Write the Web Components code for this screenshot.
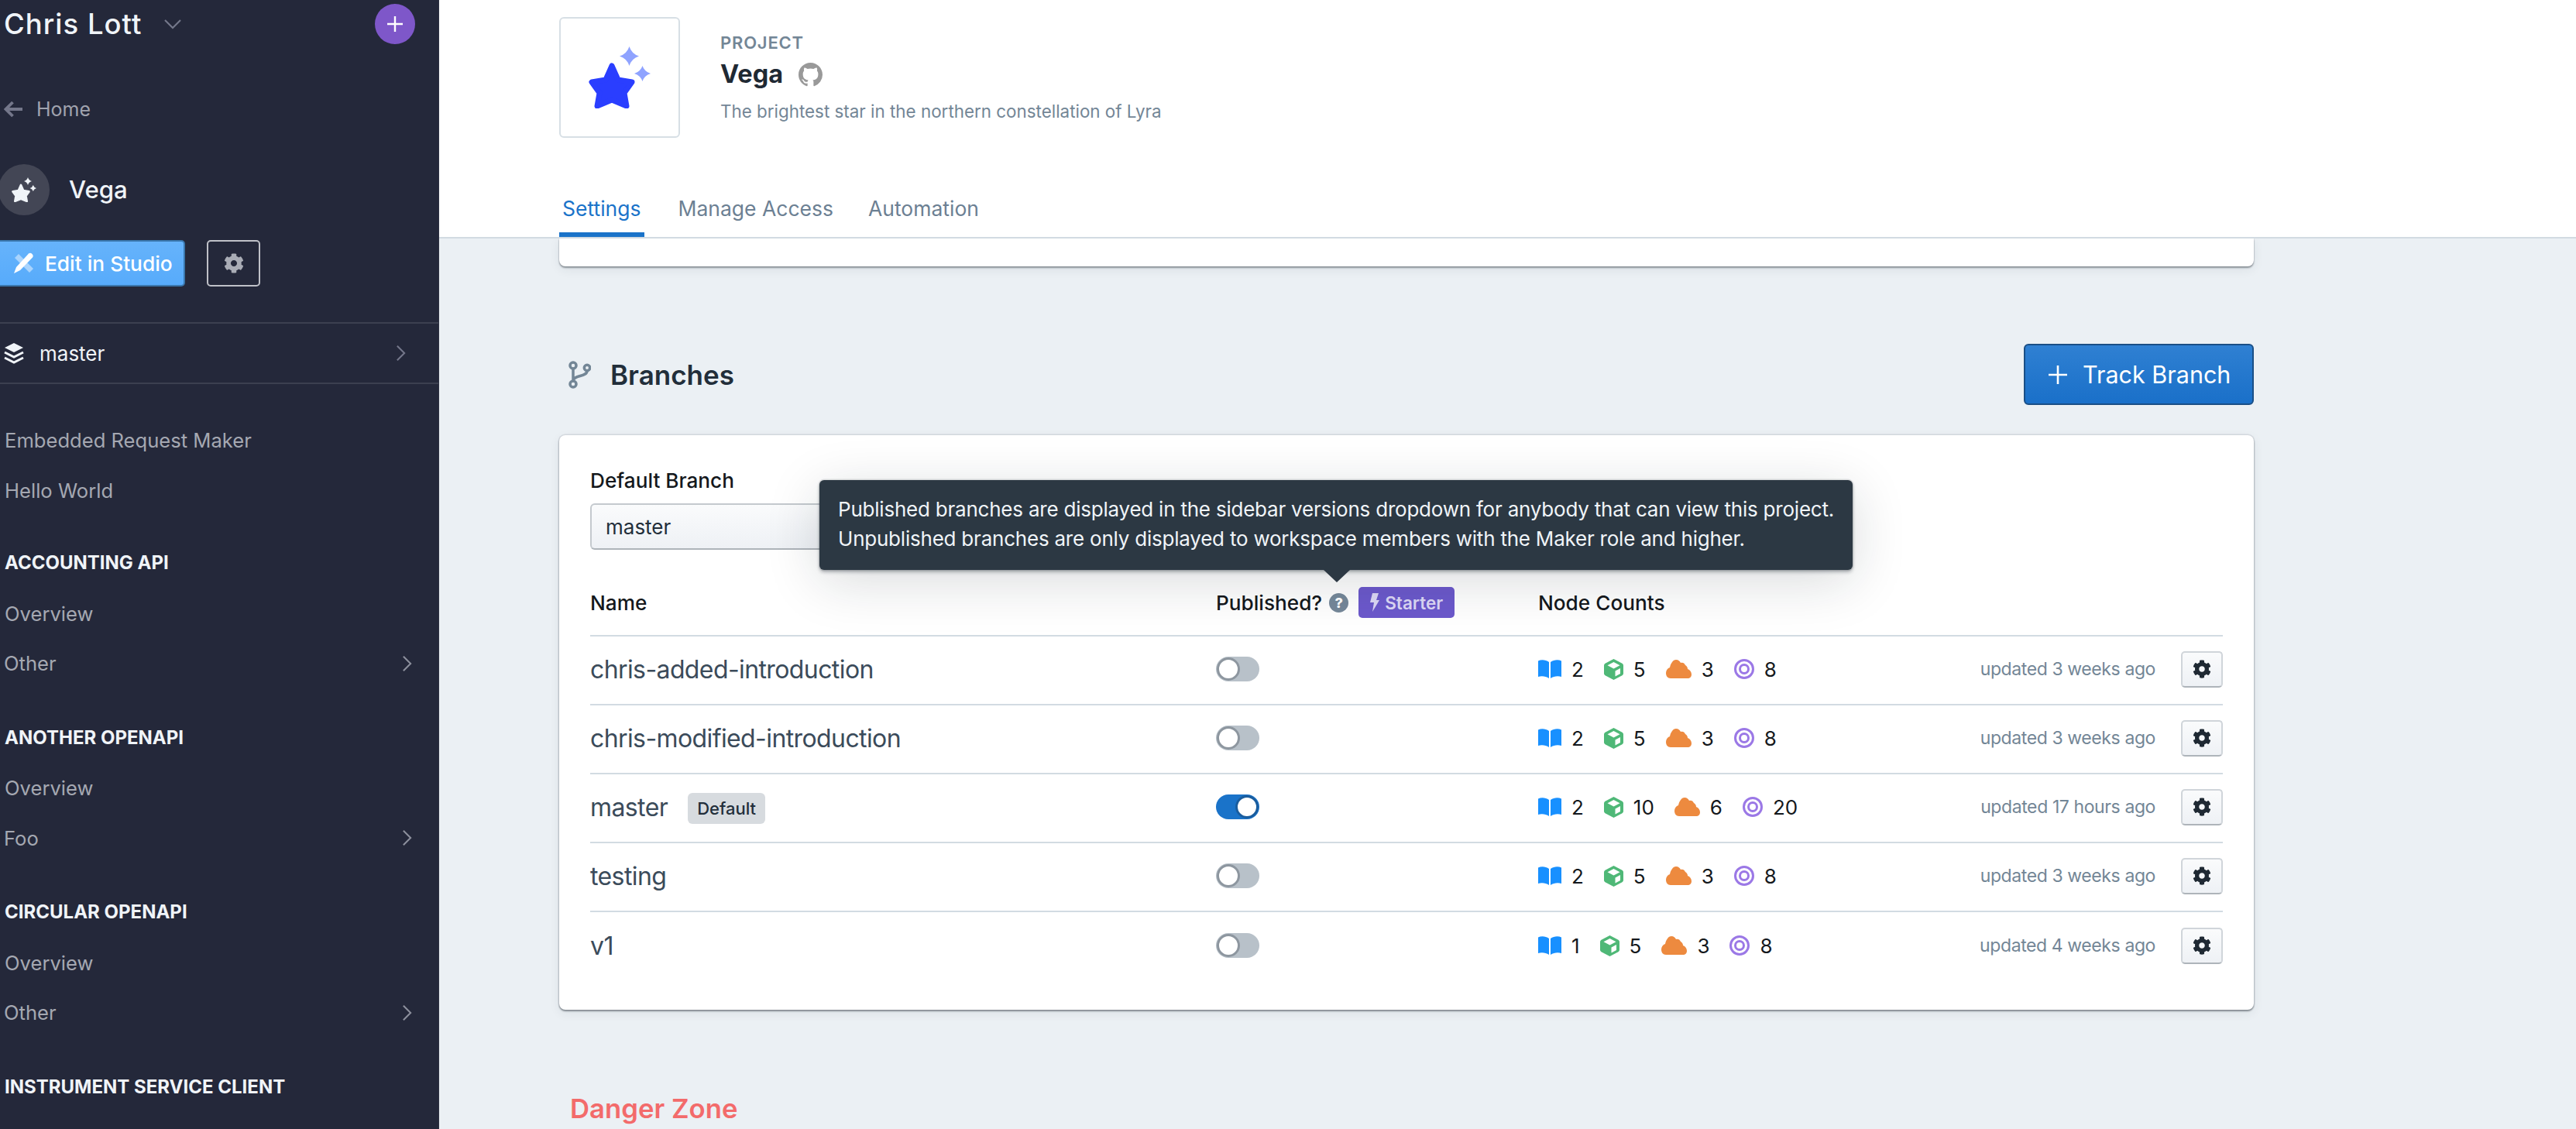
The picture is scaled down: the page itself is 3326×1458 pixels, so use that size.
<!DOCTYPE html>
<html lang="en">
<head>
<meta charset="utf-8">
<title>Vega - Settings</title>
<style>
  html, body { margin: 0; height: 1458px; overflow: hidden; background: #ebf0f4; }
  body { display: flex; font-family: Inter, "Liberation Sans", sans-serif; }
</style>
</head>
<body>
<app-sidebar>
  <nav-item>Embedded Request Maker</nav-item>
  <nav-item>Hello World</nav-item>
  <nav-section first label="Accounting API"><nav-item>Overview</nav-item><nav-item more>Other</nav-item></nav-section>
  <nav-section label="Another OpenAPI"><nav-item>Overview</nav-item><nav-item more>Foo</nav-item></nav-section>
  <nav-section label="Circular OpenAPI"><nav-item>Overview</nav-item><nav-item more>Other</nav-item></nav-section>
  <nav-section label="Instrument Service Client"></nav-section>
</app-sidebar>
<main-area>
  <project-header></project-header>
  <page-body>
    <branches-card>
      <help-tooltip>Published branches are displayed in the sidebar versions dropdown for anybody that can view this project.<br>Unpublished branches are only displayed to workspace members with the Maker role and higher.</help-tooltip>
      <branch-row name="chris-added-introduction" counts="2,5,3,8" updated="updated 3 weeks ago"></branch-row>
      <branch-row name="chris-modified-introduction" counts="2,5,3,8" updated="updated 3 weeks ago"></branch-row>
      <branch-row name="master" default on counts="2,10,6,20" updated="updated 17 hours ago"></branch-row>
      <branch-row name="testing" counts="2,5,3,8" updated="updated 3 weeks ago"></branch-row>
      <branch-row name="v1" last counts="1,5,3,8" updated="updated 4 weeks ago"></branch-row>
    </branches-card>
  </page-body>
</main-area>

<script>
const GEAR = `<svg viewBox="0 0 512 512" width="100%" height="100%"><path fill="currentColor" d="M487.4 315.7l-42.6-24.6c4.3-23.2 4.3-47 0-70.2l42.6-24.6c4.9-2.8 7.1-8.6 5.5-14-11.1-35.6-30-67.8-54.7-94.6-3.8-4.1-10-5.1-14.8-2.3L380.8 110c-17.9-15.4-38.5-27.3-60.8-35.1V25.8c0-5.6-3.9-10.5-9.4-11.7-36.7-8.2-74.3-7.8-109.2 0-5.5 1.2-9.4 6.1-9.4 11.7V75c-22.2 7.9-42.8 19.8-60.8 35.1L88.7 85.5c-4.9-2.8-11-1.9-14.8 2.3-24.7 26.7-43.6 58.9-54.7 94.6-1.7 5.4.6 11.2 5.5 14L67.3 221c-4.3 23.2-4.3 47 0 70.2l-42.6 24.6c-4.9 2.8-7.1 8.6-5.5 14 11.1 35.6 30 67.8 54.7 94.6 3.8 4.1 10 5.1 14.8 2.3l42.6-24.6c17.9 15.4 38.5 27.3 60.8 35.1v49.2c0 5.6 3.9 10.5 9.4 11.7 36.7 8.2 74.3 7.8 109.2 0 5.5-1.2 9.4-6.1 9.4-11.7v-49.2c22.2-7.9 42.8-19.8 60.8-35.1l42.6 24.6c4.9 2.8 11 1.9 14.8-2.3 24.7-26.7 43.6-58.9 54.7-94.6 1.5-5.5-.7-11.3-5.6-14.1zM256 336c-44.1 0-80-35.9-80-80s35.9-80 80-80 80 35.9 80 80-35.9 80-80 80z"/></svg>`;
const CHEVRON = `<svg viewBox="0 0 14 24" width="13" height="24"><path d="M2 2l10 10L2 22" fill="none" stroke="currentColor" stroke-width="2.2"/></svg>`;
const STAR_PATHS = (star, spark) => `
  <path d="M30 25L38 43 56 46 46 60 49 77 30 69 11 77 14 60 4 46 22 43z" fill="${star}" stroke="${star}" stroke-width="7" stroke-linejoin="round"/>
  <path d="M52.500 0Q55.500 9.500 65 12.500 55.500 15.500 52.500 25 49.500 15.500 40 12.500 49.500 9.500 52.500 0z" fill="${spark}"/>
  <path d="M69.500 25Q72 32.500 80 35 72 37.500 69.500 45 67 37.500 59 35 67 32.500 69.500 25z" fill="${spark}"/>`;

class AppSidebar extends HTMLElement {
  constructor() {
    super();
    this.attachShadow({ mode: "open" }).innerHTML = `
      <style>
        :host { display: block; flex: 0 0 567px; width: 567px; height: 1458px; overflow: hidden; background: #24283a; color: #f0f4f8; border-right: 1px solid #2f3344; box-sizing: border-box; }
        .top { display: flex; align-items: center; height: 62px; padding-left: 5px; }
        .org { font-size: 36.5px; font-weight: 500; letter-spacing: 1px; }
        .down { margin-left: 28px; color: #74778a; display: flex; }
        .add { margin-left: auto; margin-right: 30px; width: 52px; height: 52px; border-radius: 50%; background: #7e57c9; display: grid; place-items: center; }
        .home { display: flex; align-items: center; height: 40px; margin-top: 59px; padding-left: 5px; gap: 18px; font-size: 25px; color: #a0a3ae; }
        .proj { display: flex; align-items: center; margin: 51px 0 0 -2px; gap: 25px; font-size: 31.200px; font-weight: 500; }
        .avatar { width: 66px; height: 66px; border-radius: 50%; background: #434655; display: grid; place-items: center; }
        .actions { display: flex; gap: 28px; margin-top: 32px; }
        .edit { width: 239px; height: 60px; box-sizing: border-box; border: 2px solid #3a77ad; border-left: 0; border-radius: 0 5px 5px 0; background: linear-gradient(#66b3fb, #57abfb); display: flex; align-items: center; gap: 13px; padding-left: 17px; font-size: 26.300px; font-weight: 500; color: #fff; }
        .cog { width: 69px; height: 60px; box-sizing: border-box; border: 2px solid #bfc1c8; border-radius: 5px; display: grid; place-items: center; color: #a9acb5; }
        .cog span { display: block; width: 26px; height: 28px; }
        .branch { display: flex; align-items: center; height: 80px; box-sizing: border-box; margin-top: 46px; border-top: 2px solid #3c4050; border-bottom: 2px solid #3c4050; padding-left: 5px; font-size: 26px; color: #f0f4f8; gap: 20px; }
        .branch .chev { margin-left: auto; margin-right: 42px; color: #74778a; display: flex; }
        .nav { margin-top: 40px; display: block; }
      </style>
      <div class="top"><span class="org">Chris Lott</span>
        <span class="down"><svg viewBox="0 0 24 14" width="24" height="14"><path d="M2 2l10 10L22 2" fill="none" stroke="currentColor" stroke-width="2.2"/></svg></span>
        <span class="add"><svg viewBox="0 0 22 22" width="22" height="22"><path d="M11 1v20M1 11h20" stroke="#fff" stroke-width="2.4"/></svg></span>
      </div>
      <div class="home"><svg viewBox="0 0 24 22" width="24" height="22"><path d="M11.500 2L2.500 11l9 9M3 11h21" fill="none" stroke="#74778a" stroke-width="3.800"/></svg>Home</div>
      <div class="proj"><span class="avatar"><svg width="32" height="32" viewBox="0 0 80 80">${STAR_PATHS("#f0f4f8", "#f0f4f8")}</svg></span>Vega</div>
      <div class="actions">
        <div class="edit"><svg viewBox="0 0 28 28" width="28" height="28">
            <path d="M2 7l5-5 19 19-5 5z" fill="#a9d4fd"/>
            <path d="M20 1.500c1.300-1 3-1 4.500.5s1.500 3.200.5 4.500L9 23l-8 4 3-8z" fill="#fff"/>
          </svg>Edit in Studio</div>
        <div class="cog"><span>${GEAR}</span></div>
      </div>
      <div class="branch"><svg viewBox="0 0 26 28" width="26" height="28"><path d="M13 1l12 6-12 6L1 7z" fill="#f0f4f8"/><path d="M1 13l12 6 12-6M1 20l12 6 12-6" fill="none" stroke="#f0f4f8" stroke-width="3"/></svg>master<span class="chev">${CHEVRON}</span></div>
      <div class="nav"><slot></slot></div>`;
  }
}
customElements.define("app-sidebar", AppSidebar);

class NavItem extends HTMLElement {
  constructor() {
    super();
    this.attachShadow({ mode: "open" }).innerHTML = `
      <style>
        :host { display: flex; align-items: center; height: 64.700px; padding: 0 34px 0 6px; font-size: 25.600px; color: #a5a8b2; }
        :host([more]) { padding-left: 5px; }
        span { margin-left: auto; display: flex; color: #8d909d; }
      </style>
      <slot></slot>${this.hasAttribute("more") ? `<span>${CHEVRON}</span>` : ""}`;
  }
}
customElements.define("nav-item", NavItem);

class NavSection extends HTMLElement {
  constructor() {
    super();
    this.attachShadow({ mode: "open" }).innerHTML = `
      <style>
        :host { display: block; margin-top: 31.500px; }
        :host([first]) { margin-top: 29.600px; }
        h3 { margin: 0; height: 64.700px; line-height: 64.700px; padding-left: 6px; font-size: 24px; font-weight: 700; text-transform: uppercase; color: #f0f4f8; }
      </style>
      <h3>${this.getAttribute("label")}</h3><slot></slot>`;
  }
}
customElements.define("nav-section", NavSection);

class MainArea extends HTMLElement {
  constructor() {
    super();
    this.attachShadow({ mode: "open" }).innerHTML = `
      <style>:host { display: block; flex: 1; min-width: 0; height: 1458px; overflow: hidden; background: #ebf0f4; }</style>
      <slot></slot>`;
  }
}
customElements.define("main-area", MainArea);

class ProjectHeader extends HTMLElement {
  constructor() {
    super();
    this.attachShadow({ mode: "open" }).innerHTML = `
      <style>
        :host { display: flex; flex-direction: column; position: relative; z-index: 2; height: 308px; box-sizing: border-box; background: #fff; border-bottom: 2px solid #d2dbe2; padding: 22px 0 0 155px; }
        .info { display: flex; }
        .logo { width: 156px; height: 156px; box-sizing: border-box; border: 2px solid #d7dfe5; border-radius: 6px; display: grid; place-items: center; }
        .logo span { display: block; width: 80px; height: 80px; }
        .text { margin: 20px 0 0 52px; }
        .eyebrow { font-size: 22px; font-weight: 600; line-height: 26px; letter-spacing: .8px; color: #738696; }
        h1 { margin: 4px 0 0; display: flex; align-items: center; gap: 20px; font-size: 32.500px; line-height: 48px; font-weight: 700; color: #1f2933; }
        p { margin: 10px 0 0; font-size: 22.400px; line-height: 28px; color: #738696; }
        .tabs { display: flex; margin-top: auto; }
        .tabs div { height: 66px; box-sizing: border-box; padding: 0 2px 8px; display: flex; align-items: center; font-size: 26.500px; color: #6c8093; }
        .tabs div + div { margin-left: 41px; }
        .tabs .active { color: #1a73c9; border-bottom: 6px solid #1a73c9; padding: 0 5px 2px 4px; }
      </style>
      <div class="info">
        <div class="logo"><span><svg viewBox="0 0 80 80" width="80" height="80">${STAR_PATHS("#2a3eff", "#8fa3ff")}</svg></span></div>
        <div class="text">
          <div class="eyebrow">PROJECT</div>
          <h1>Vega <svg viewBox="0 0 16 16" width="31" height="31"><path fill="#999" d="M8 0C3.58 0 0 3.58 0 8c0 3.54 2.29 6.53 5.47 7.59.4.07.55-.17.55-.38 0-.19-.01-.82-.01-1.49-2.01.37-2.53-.49-2.69-.94-.09-.23-.48-.94-.82-1.13-.28-.15-.68-.52-.01-.53.63-.01 1.08.58 1.23.82.72 1.21 1.87.87 2.33.66.07-.52.28-.87.51-1.07-1.78-.2-3.64-.89-3.64-3.95 0-.87.31-1.59.82-2.15-.08-.2-.36-1.02.08-2.12 0 0 .67-.21 2.2.82.64-.18 1.32-.27 2-.27.68 0 1.36.09 2 .27 1.53-1.04 2.2-.82 2.2-.82.44 1.1.16 1.92.08 2.12.51.56.82 1.27.82 2.15 0 3.07-1.87 3.75-3.65 3.95.29.25.54.73.54 1.48 0 1.07-.01 1.93-.01 2.2 0 .21.15.46.55.38A8.013 8.013 0 0016 8c0-4.42-3.58-8-8-8z"/></svg></h1>
          <p>The brightest star in the northern constellation of Lyra</p>
        </div>
      </div>
      <div class="tabs"><div class="active">Settings</div><div>Manage Access</div><div>Automation</div></div>`;
  }
}
customElements.define("project-header", ProjectHeader);

class PageBody extends HTMLElement {
  constructor() {
    super();
    this.attachShadow({ mode: "open" }).innerHTML = `
      <style>
        :host { display: block; width: 2188px; margin-left: 155px; }
        .stub { height: 36px; background: #fff; border-radius: 0 0 8px 8px; box-shadow: 0 2px 2px rgba(40,50,60,.45), 0 4px 14px rgba(40,50,60,.08), 0 0 0 1px rgba(40,50,60,.06); }
        .head { display: flex; align-items: center; justify-content: space-between; margin-top: 100px; }
        h2 { margin: 0; display: flex; align-items: center; gap: 25px; padding-left: 11px; font-size: 35px; font-weight: 600; color: #222e3a; }
        .track { width: 297px; height: 79px; box-sizing: border-box; border: 2px solid #1a4f86; border-radius: 6px; background: linear-gradient(#2f80d2, #1a70c9); display: flex; align-items: center; gap: 19px; padding-left: 29px; font-size: 30.500px; color: #fff; }
        .body { margin-top: 39px; }
        .danger { margin: 105px 0 0 14px; font-size: 34.700px; line-height: 44px; font-weight: 600; color: #f36b6b; }
      </style>
      <div class="stub"></div>
      <div class="head">
        <h2><svg viewBox="0 0 30 36" width="30" height="36" fill="none" stroke="#738696" stroke-width="3.500"><circle cx="7" cy="6" r="4"/><circle cx="7" cy="30" r="4"/><circle cx="25" cy="9" r="3.700"/><path d="M7 10v16M25 13c0 8-18 5-18 13"/></svg>Branches</h2>
        <div class="track"><svg viewBox="0 0 26 26" width="26" height="26"><path d="M13 1v24M1 13h24" stroke="#fff" stroke-width="2.600"/></svg>Track Branch</div>
      </div>
      <div class="body"><slot></slot></div>
      <div class="danger">Danger Zone</div>`;
  }
}
customElements.define("page-body", PageBody);

const ROW_COLUMNS = "808px 416px 1fr auto 54px";

class BranchesCard extends HTMLElement {
  constructor() {
    super();
    this.attachShadow({ mode: "open" }).innerHTML = `
      <style>
        :host { display: block; position: relative; height: 742px; box-sizing: border-box; padding: 43px 40px 0; background: #fff; border-radius: 8px; box-shadow: 0 2px 2px rgba(40,50,60,.45), 0 4px 14px rgba(40,50,60,.08), 0 0 0 1.500px rgba(40,50,60,.1); }
        label { display: block; font-size: 26.200px; line-height: 32px; font-weight: 500; color: #14181c; }
        .select { margin-top: 13px; width: 700px; height: 60px; box-sizing: border-box; border: 2px solid #c4c9ce; border-bottom-color: #aeb4ba; border-radius: 6px; background: linear-gradient(#fafbfc, #eef1f5); padding-left: 18px; font-size: 26px; line-height: 58px; color: #222e3a; }
        .cols { display: grid; grid-template-columns: ${ROW_COLUMNS}; align-items: center; height: 86px; margin-top: 26px; box-sizing: border-box; border-bottom: 2px solid #d2dbe2; font-size: 26.200px; font-weight: 500; color: #14181c; }
        .pub { display: flex; align-items: center; }
        .help { width: 25px; height: 25px; margin-left: 9px; border-radius: 50%; background: #76889a; color: #fff; font-size: 18px; font-weight: 800; display: grid; place-items: center; }
        .starter { margin-left: 13px; height: 40px; width: 124px; box-sizing: border-box; border-radius: 5px; background: #6c59cc; display: flex; align-items: center; justify-content: center; gap: 7px; font-size: 22.500px; font-weight: 600; color: #ddd8f6; }
      </style>
      <label>Default Branch</label>
      <div class="select">master</div>
      <div class="cols">
        <span>Name</span>
        <span class="pub">Published?<span class="help">?</span><span class="starter"><svg viewBox="0 0 12 24" width="12" height="24"><path d="M3 0h8L8 9h4L3 24l2-12H0z" fill="#ddd8f6"/></svg>Starter</span></span>
        <span>Node Counts</span>
      </div>
      <slot></slot>`;
  }
}
customElements.define("branches-card", BranchesCard);

class HelpTooltip extends HTMLElement {
  constructor() {
    super();
    this.attachShadow({ mode: "open" }).innerHTML = `
      <style>
        :host { display: block; position: absolute; left: 336px; top: 58px; width: 1334px; height: 116px; box-sizing: border-box; z-index: 3; padding: 19px 24px; background: #2c3843; border-radius: 6px; font-size: 26px; letter-spacing: -.22px; line-height: 38px; color: #f0f4f8; white-space: nowrap; box-shadow: 0 0 0 1.500px rgba(40,50,60,.12), 0 3px 4px rgba(20,30,40,.3), 0 14px 70px rgba(20,30,40,.16); }
        i { position: absolute; left: 651px; top: 100%; width: 0; height: 0; border: 17px solid transparent; border-top: 16px solid #2c3843; border-bottom: 0; }
      </style>
      <slot></slot><i></i>`;
  }
}
customElements.define("help-tooltip", HelpTooltip);

class ToggleSwitch extends HTMLElement {
  constructor() {
    super();
    this.attachShadow({ mode: "open" }).innerHTML = `
      <style>
        :host { display: block; position: relative; width: 56px; height: 32px; border-radius: 16px; background: #b8c1c9; }
        :host([on]) { background: #1a73c9; }
        i { position: absolute; left: 1px; top: 1px; width: 30px; height: 30px; box-sizing: border-box; border-radius: 50%; background: #fff; border: 3px solid #8d969f; }
        :host([on]) i { left: 25px; border-color: #1a5d9e; }
      </style>
      <i></i>`;
  }
}
customElements.define("toggle-switch", ToggleSwitch);

const COUNT_ICONS = [
  // book
  `<svg viewBox="0 0 30 24" width="30" height="24"><path d="M0 1.500C4-.5 10 0 14 3v21C10 21 4 20.500 0 22zM30 1.500C26-.5 20 0 16 3v21c4-3 10-3.500 14-2z" fill="#1890ff"/></svg>`,
  // cube
  `<svg viewBox="0 0 25 27" width="25" height="27"><path d="M12.500 0L23 5.500c1.200.7 2 1.800 2 3v10c0 1.200-.8 2.300-2 3L12.500 27 2 21.500c-1.200-.7-2-1.800-2-3v-10c0-1.200.8-2.300 2-3z" fill="#4fb877"/><path d="M12.500 4l8 4.300-8 4.300-8-4.300zM14.500 15.500l6.500-3.500v7l-6.500 3.500z" fill="#fff"/></svg>`,
  // cloud
  `<svg viewBox="0 0 33 24" width="33" height="24"><path d="M6 24C2 24 0 21 0 17c0-3 2-6 5-7C6 5 9 0 13 0c3 0 5 2 6 4 2-1 5 0 6 3 2 1 3 3 3 5 3 1 5 4 5 7 0 3-2 5-5 5z" fill="#ed8a3f"/></svg>`,
  // target
  `<svg viewBox="0 0 26 26" width="26" height="26" fill="none" stroke="#9b78e6"><circle cx="13" cy="13" r="11.500" stroke-width="3"/><circle cx="13" cy="13" r="5.500" stroke-width="3"/></svg>`
];

class CountList extends HTMLElement {
  constructor() {
    super();
    const nums = this.getAttribute("values").split(",");
    this.attachShadow({ mode: "open" }).innerHTML = `
      <style>
        :host { display: flex; align-items: center; gap: 26px; font-size: 26px; color: #14181c; }
        span { display: flex; align-items: center; gap: 13px; }
        svg { display: block; }
      </style>
      ${nums.map((n, i) => `<span>${COUNT_ICONS[i]}${n}</span>`).join("")}`;
  }
}
customElements.define("count-list", CountList);

class BranchRow extends HTMLElement {
  constructor() {
    super();
    const name = this.getAttribute("name");
    this.attachShadow({ mode: "open" }).innerHTML = `
      <style>
        :host { display: grid; grid-template-columns: ${ROW_COLUMNS}; align-items: center; height: 89.100px; box-sizing: border-box; padding-bottom: 3px; border-bottom: 2px solid #d2dbe2; }
        :host([last]) { border-bottom: 0; }
        .name { display: flex; align-items: center; gap: 26px; font-size: 32px; letter-spacing: -.6px; color: #3b4b5a; }
        .tag { height: 40px; width: 100px; margin-top: 4px; border-radius: 6px; background: #d7dbdf; display: grid; place-items: center; font-size: 22px; letter-spacing: 0; font-weight: 500; color: #222e3a; }
        .updated { font-size: 23px; letter-spacing: -.4px; color: #738696; margin-right: 33px; }
        .gear { width: 54px; height: 47px; box-sizing: border-box; border: 2px solid #d0d5da; border-bottom-color: #aeb4ba; border-radius: 5px; background: linear-gradient(#fafbfc, #eef1f5); display: grid; place-items: center; color: #1f2933; }
        .gear span { display: block; width: 24px; height: 24px; }
      </style>
      <div class="name">${name}${this.hasAttribute("default") ? `<span class="tag">Default</span>` : ""}</div>
      <div><toggle-switch ${this.hasAttribute("on") ? "on" : ""}></toggle-switch></div>
      <count-list values="${this.getAttribute("counts")}"></count-list>
      <div class="updated">${this.getAttribute("updated")}</div>
      <div class="gear"><span>${GEAR}</span></div>`;
  }
}
customElements.define("branch-row", BranchRow);
</script>
</body>
</html>
